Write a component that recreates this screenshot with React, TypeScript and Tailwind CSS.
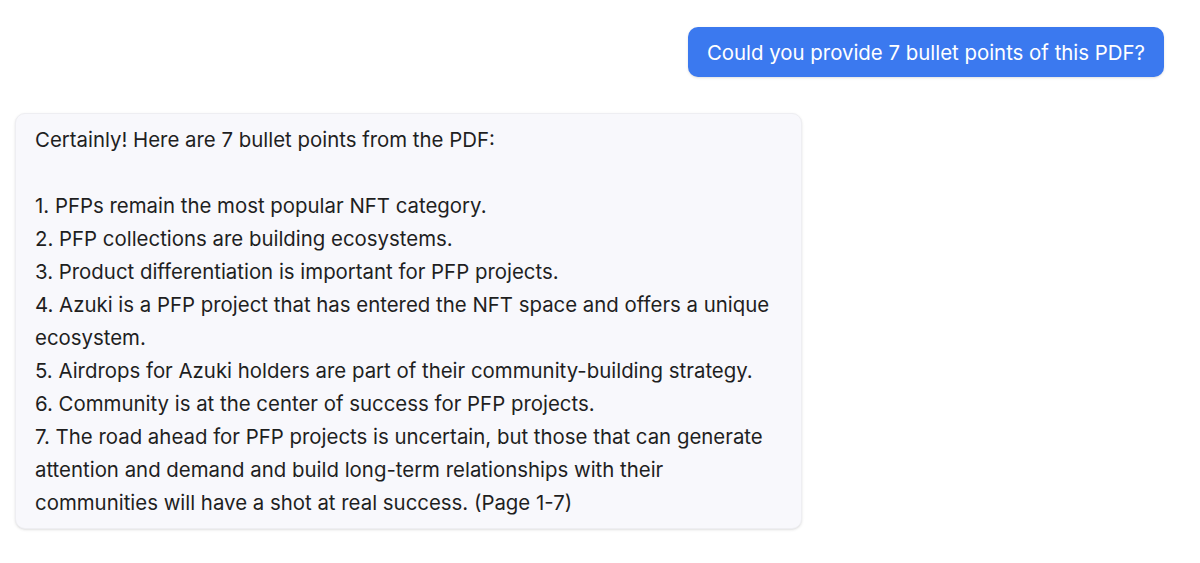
const lines = [
  '1. PFPs remain the most popular NFT category.',
  '2. PFP collections are building ecosystems.',
  '3. Product differentiation is important for PFP projects.',
  '4. Azuki is a PFP project that has entered the NFT space and offers a unique ecosystem.',
  '5. Airdrops for Azuki holders are part of their community-building strategy.',
  '6. Community is at the center of success for PFP projects.',
  '7. The road ahead for PFP projects is uncertain, but those that can generate attention and demand and build long-term relationships with their communities will have a shot at real success. (Page 1-7)',
];

const App = () => {
  return (
    <div className="w-[1200px] h-[563px] bg-white font-['Inter',sans-serif] text-[20.4px] overflow-hidden">
      <div className="flex flex-col pt-[27px] pl-[15px] pr-[36px] gap-[36px]">
        {/* User message */}
        <div className="flex justify-end">
          <div className="h-[50px] flex items-center pt-[2px] px-[19px] rounded-[10px] bg-[#3b79ef] text-white shadow-sm">
            Could you provide 7 bullet points of this PDF?
          </div>
        </div>

        {/* Assistant reply */}
        <div className="w-[787px] px-[19px] py-[9px] rounded-[10px] bg-[#f8f8fc] border border-[#eeeef2] shadow-sm text-[#1f1f1f] leading-[33px]">
          <p>Certainly! Here are 7 bullet points from the PDF:</p>
          <p className="h-[33px]" />
          {lines.map((l) => (
            <p key={l}>{l}</p>
          ))}
        </div>
      </div>
    </div>
  );
};

export default App;
